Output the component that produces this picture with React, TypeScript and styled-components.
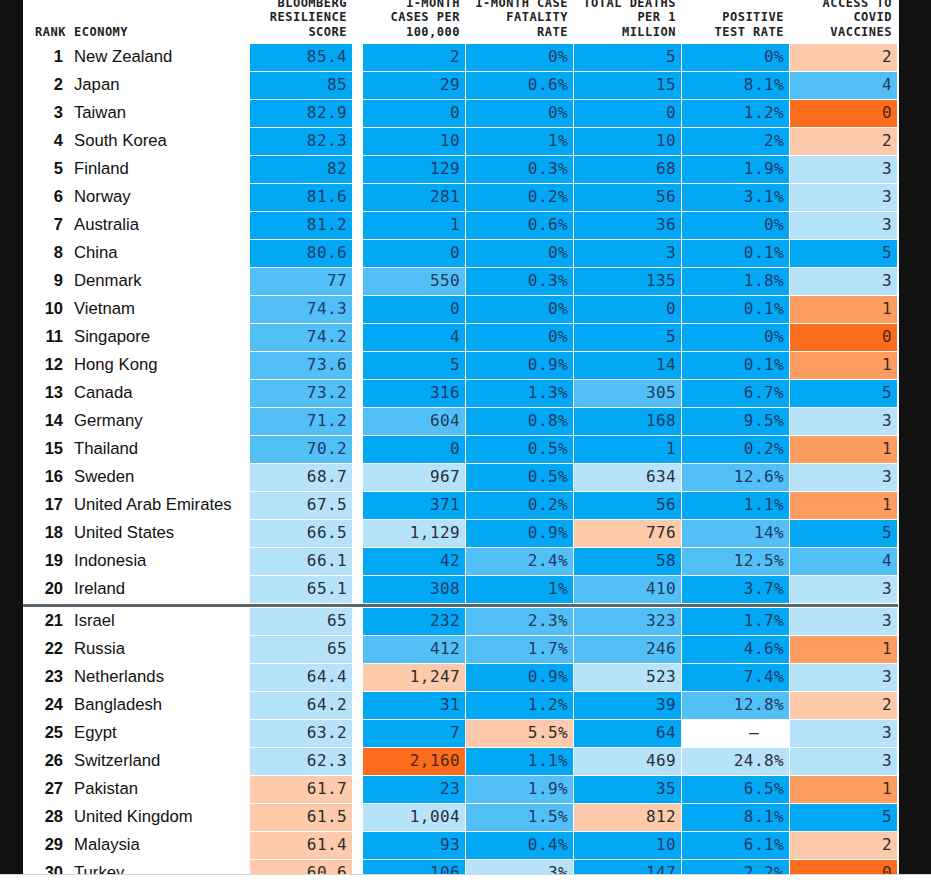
import React from "react";
import styled, { createGlobalStyle } from "styled-components";

type Tone = "b3" | "b2" | "b1" | "o1" | "o2" | "o3" | "w";

const toneBg: Record<Tone, string> = {
  b3: "#03a8f4",
  b2: "#52c0f6",
  b1: "#b6e3fa",
  o1: "#fdcbab",
  o2: "#fe9d60",
  o3: "#fb6c1c",
  w: "#ffffff",
};

const toneFg: Record<Tone, string> = {
  b3: "#1c3a68",
  b2: "#1f3a62",
  b1: "#2a2e36",
  o1: "#2e2a28",
  o2: "#3a2a22",
  o3: "#4a2812",
  w: "#2a2a2a",
};

type Cell = [string, Tone];
type Entry = { rank: number; name: string; cells: Cell[] };

const rows: Entry[] = [
  { rank: 1, name: "New Zealand", cells: [["85.4", "b3"], ["2", "b3"], ["0%", "b3"], ["5", "b3"], ["0%", "b3"], ["2", "o1"]] },
  { rank: 2, name: "Japan", cells: [["85", "b3"], ["29", "b3"], ["0.6%", "b3"], ["15", "b3"], ["8.1%", "b3"], ["4", "b2"]] },
  { rank: 3, name: "Taiwan", cells: [["82.9", "b3"], ["0", "b3"], ["0%", "b3"], ["0", "b3"], ["1.2%", "b3"], ["0", "o3"]] },
  { rank: 4, name: "South Korea", cells: [["82.3", "b3"], ["10", "b3"], ["1%", "b3"], ["10", "b3"], ["2%", "b3"], ["2", "o1"]] },
  { rank: 5, name: "Finland", cells: [["82", "b3"], ["129", "b3"], ["0.3%", "b3"], ["68", "b3"], ["1.9%", "b3"], ["3", "b1"]] },
  { rank: 6, name: "Norway", cells: [["81.6", "b3"], ["281", "b3"], ["0.2%", "b3"], ["56", "b3"], ["3.1%", "b3"], ["3", "b1"]] },
  { rank: 7, name: "Australia", cells: [["81.2", "b3"], ["1", "b3"], ["0.6%", "b3"], ["36", "b3"], ["0%", "b3"], ["3", "b1"]] },
  { rank: 8, name: "China", cells: [["80.6", "b3"], ["0", "b3"], ["0%", "b3"], ["3", "b3"], ["0.1%", "b3"], ["5", "b3"]] },
  { rank: 9, name: "Denmark", cells: [["77", "b2"], ["550", "b2"], ["0.3%", "b3"], ["135", "b3"], ["1.8%", "b3"], ["3", "b1"]] },
  { rank: 10, name: "Vietnam", cells: [["74.3", "b2"], ["0", "b3"], ["0%", "b3"], ["0", "b3"], ["0.1%", "b3"], ["1", "o2"]] },
  { rank: 11, name: "Singapore", cells: [["74.2", "b2"], ["4", "b3"], ["0%", "b3"], ["5", "b3"], ["0%", "b3"], ["0", "o3"]] },
  { rank: 12, name: "Hong Kong", cells: [["73.6", "b2"], ["5", "b3"], ["0.9%", "b3"], ["14", "b3"], ["0.1%", "b3"], ["1", "o2"]] },
  { rank: 13, name: "Canada", cells: [["73.2", "b2"], ["316", "b3"], ["1.3%", "b3"], ["305", "b2"], ["6.7%", "b3"], ["5", "b3"]] },
  { rank: 14, name: "Germany", cells: [["71.2", "b2"], ["604", "b2"], ["0.8%", "b3"], ["168", "b3"], ["9.5%", "b3"], ["3", "b1"]] },
  { rank: 15, name: "Thailand", cells: [["70.2", "b2"], ["0", "b3"], ["0.5%", "b3"], ["1", "b3"], ["0.2%", "b3"], ["1", "o2"]] },
  { rank: 16, name: "Sweden", cells: [["68.7", "b1"], ["967", "b1"], ["0.5%", "b3"], ["634", "b1"], ["12.6%", "b2"], ["3", "b1"]] },
  { rank: 17, name: "United Arab Emirates", cells: [["67.5", "b1"], ["371", "b3"], ["0.2%", "b3"], ["56", "b3"], ["1.1%", "b3"], ["1", "o2"]] },
  { rank: 18, name: "United States", cells: [["66.5", "b1"], ["1,129", "b1"], ["0.9%", "b3"], ["776", "o1"], ["14%", "b2"], ["5", "b3"]] },
  { rank: 19, name: "Indonesia", cells: [["66.1", "b1"], ["42", "b3"], ["2.4%", "b2"], ["58", "b3"], ["12.5%", "b2"], ["4", "b2"]] },
  { rank: 20, name: "Ireland", cells: [["65.1", "b1"], ["308", "b3"], ["1%", "b3"], ["410", "b2"], ["3.7%", "b3"], ["3", "b1"]] },
  { rank: 21, name: "Israel", cells: [["65", "b1"], ["232", "b3"], ["2.3%", "b2"], ["323", "b2"], ["1.7%", "b3"], ["3", "b1"]] },
  { rank: 22, name: "Russia", cells: [["65", "b1"], ["412", "b2"], ["1.7%", "b2"], ["246", "b2"], ["4.6%", "b3"], ["1", "o2"]] },
  { rank: 23, name: "Netherlands", cells: [["64.4", "b1"], ["1,247", "o1"], ["0.9%", "b3"], ["523", "b1"], ["7.4%", "b3"], ["3", "b1"]] },
  { rank: 24, name: "Bangladesh", cells: [["64.2", "b1"], ["31", "b3"], ["1.2%", "b3"], ["39", "b3"], ["12.8%", "b2"], ["2", "o1"]] },
  { rank: 25, name: "Egypt", cells: [["63.2", "b1"], ["7", "b3"], ["5.5%", "o1"], ["64", "b3"], ["–", "w"], ["3", "b1"]] },
  { rank: 26, name: "Switzerland", cells: [["62.3", "b1"], ["2,160", "o3"], ["1.1%", "b3"], ["469", "b1"], ["24.8%", "b1"], ["3", "b1"]] },
  { rank: 27, name: "Pakistan", cells: [["61.7", "o1"], ["23", "b3"], ["1.9%", "b2"], ["35", "b3"], ["6.5%", "b3"], ["1", "o2"]] },
  { rank: 28, name: "United Kingdom", cells: [["61.5", "o1"], ["1,004", "b1"], ["1.5%", "b2"], ["812", "o1"], ["8.1%", "b3"], ["5", "b3"]] },
  { rank: 29, name: "Malaysia", cells: [["61.4", "o1"], ["93", "b3"], ["0.4%", "b3"], ["10", "b3"], ["6.1%", "b3"], ["2", "o1"]] },
  { rank: 30, name: "Turkey", cells: [["60.6", "o1"], ["106", "b3"], ["3%", "b1"], ["147", "b3"], ["2.2%", "b3"], ["0", "o3"]] },
];

const headers: string[][] = [
  ["BLOOMBERG", "RESILIENCE", "SCORE"],
  ["1-MONTH", "CASES PER", "100,000"],
  ["1-MONTH CASE", "FATALITY", "RATE"],
  ["TOTAL DEATHS", "PER 1", "MILLION"],
  ["POSITIVE", "TEST RATE"],
  ["ACCESS TO", "COVID", "VACCINES"],
];

const GlobalStyle = createGlobalStyle`
  html, body {
    margin: 0;
    padding: 0;
    background: #111111;
  }
  body {
    width: 931px;
    height: 882px;
    overflow: hidden;
  }
`;

const COLS = "46px 179px 102px 9px 102px 107px 107px 107px 107px";

const Page = styled.div`
  display: flex;
  flex-direction: column;
  width: 931px;
  height: 882px;
  background: #111111;
`;

const Stage = styled.div`
  display: flex;
  height: 874px;
  overflow: hidden;
`;

const Panel = styled.main`
  margin-left: 23px;
  width: 876px;
  height: 874px;
  background: #ffffff;
  overflow: hidden;
  display: flex;
  flex-direction: column;
`;

const Footer = styled.div`
  height: 8px;
  background: #ffffff;
  border-top: 1px solid #d8d8d8;
  box-sizing: border-box;
`;

/* The page is scrolled a little: the first header line sits partly above the top edge. */
const HeaderRow = styled.div`
  display: grid;
  grid-template-columns: ${COLS};
  column-gap: 1px;
  margin-top: -4px;
  height: 48px;
  flex: 0 0 48px;
  align-items: start;
  box-sizing: border-box;
  font-family: "DejaVu Sans Mono", "Liberation Mono", monospace;
  font-weight: 700;
  font-size: 12px;
  line-height: 14.3px;
  letter-spacing: 0.5px;
  color: #222222;
`;

const HeadCell = styled.div<{ $left?: boolean; $pr?: number; $pl?: number; $skip?: number }>`
  text-align: ${(p) => (p.$left ? "left" : "right")};
  padding-right: ${(p) => p.$pr ?? 0}px;
  padding-left: ${(p) => p.$pl ?? 0}px;
  padding-top: ${(p) => (p.$skip ?? 0) * 14.3}px;
  white-space: nowrap;
`;

const Body = styled.div`
  display: flex;
  flex-direction: column;
  gap: 1px;
`;

const Row = styled.div`
  display: grid;
  grid-template-columns: ${COLS};
  column-gap: 1px;
  height: 27px;
  flex: 0 0 27px;
`;

const Separator = styled.div`
  width: 875px;
  height: 3px;
  flex: 0 0 3px;
  background: #5d646c;
`;

const RankCell = styled.div`
  display: flex;
  align-items: center;
  justify-content: flex-end;
  padding: 0 6px 2px 0;
  box-sizing: border-box;
  font-family: "Liberation Sans", Arial, sans-serif;
  font-weight: 700;
  font-size: 16.5px;
  color: #111111;
`;

const NameCell = styled.div`
  display: flex;
  align-items: center;
  padding: 0 0 2px 4px;
  box-sizing: border-box;
  font-family: "Liberation Sans", Arial, sans-serif;
  font-size: 16.7px;
  color: #111111;
  white-space: nowrap;
`;

const Spacer = styled.div`
  background: #ffffff;
`;

const DataCell = styled.div<{ $tone: Tone; $pr?: number }>`
  display: flex;
  align-items: center;
  justify-content: flex-end;
  padding: 0 ${(p) => p.$pr ?? 5}px 2px 0;
  box-sizing: border-box;
  background: ${(p) => toneBg[p.$tone]};
  color: ${(p) => toneFg[p.$tone]};
  font-family: "DejaVu Sans Mono", "Liberation Mono", monospace;
  font-size: 16px;
  letter-spacing: 0.4px;
  white-space: nowrap;
`;

function TableRow({ entry }: { entry: Entry }) {
  const [score, ...rest] = entry.cells;
  return (
    <Row>
      <RankCell>{entry.rank}</RankCell>
      <NameCell>{entry.name}</NameCell>
      <DataCell $tone={score[1]}>{score[0]}</DataCell>
      <Spacer />
      {rest.map(([v, t], i) => (
        <DataCell key={i} $tone={t} $pr={v === "–" ? 30 : 5}>
          {v}
        </DataCell>
      ))}
    </Row>
  );
}

function HeaderLines({ lines }: { lines: string[] }) {
  return (
    <HeadCell $pr={5} $skip={3 - lines.length}>
      {lines.map((l) => (
        <div key={l}>{l}</div>
      ))}
    </HeadCell>
  );
}

export default function App() {
  const top = rows.slice(0, 20);
  const bottom = rows.slice(20);
  return (
    <>
      <GlobalStyle />
      <Page>
        <Stage>
          <Panel>
            <HeaderRow>
              <HeadCell $pr={3} $skip={2}>RANK</HeadCell>
              <HeadCell $left $pl={4} $skip={2}>ECONOMY</HeadCell>
              <HeaderLines lines={headers[0]} />
              <div />
              {headers.slice(1).map((h, i) => (
                <HeaderLines key={i} lines={h} />
              ))}
            </HeaderRow>
            <Body>
              {top.map((e) => (
                <TableRow key={e.rank} entry={e} />
              ))}
              <Separator />
              {bottom.map((e) => (
                <TableRow key={e.rank} entry={e} />
              ))}
            </Body>
          </Panel>
        </Stage>
        <Footer />
      </Page>
    </>
  );
}
